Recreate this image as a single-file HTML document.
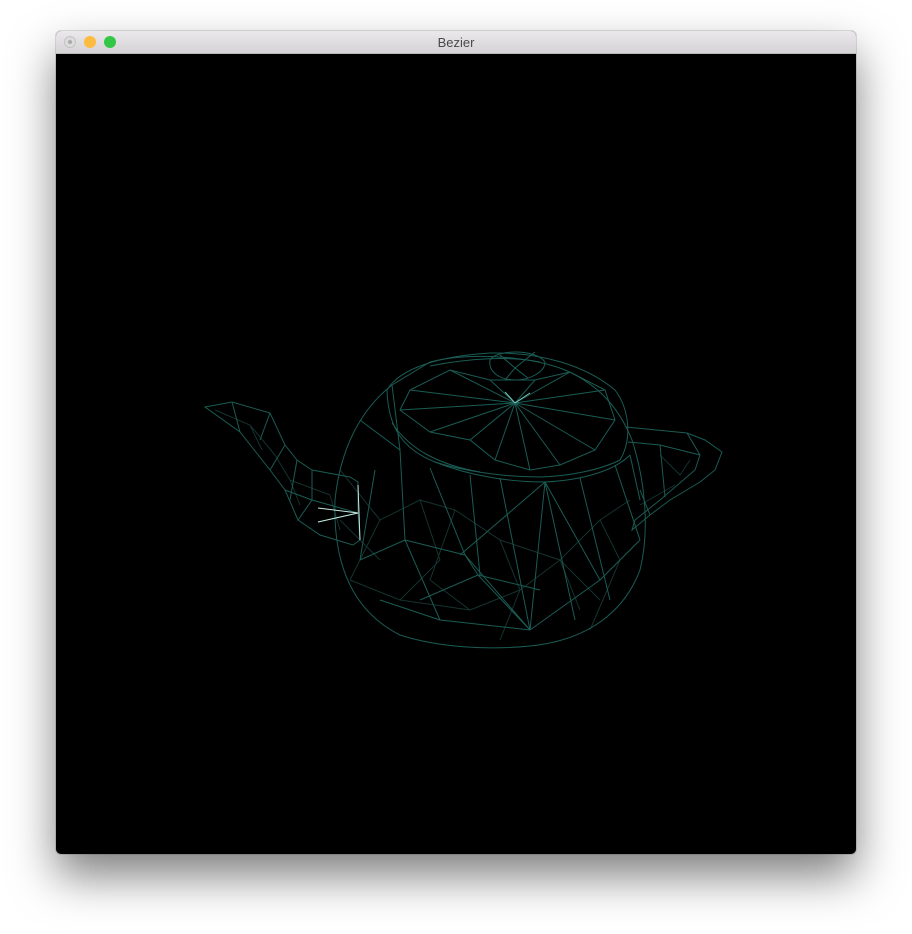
<!DOCTYPE html>
<html><head><meta charset="utf-8"><style>
html,body{margin:0;padding:0;background:#fff;width:912px;height:934px;overflow:hidden}
.win{position:absolute;left:56px;top:31px;width:800px;height:823px;border-radius:5px;box-shadow:0 22px 45px rgba(0,0,0,0.5),0 0 0 1px rgba(0,0,0,0.12);background:#000;overflow:hidden}
.tb{position:absolute;left:0;top:0;width:800px;height:22px;background:linear-gradient(#ebe9eb,#d5d3d5);border-bottom:1px solid #b9b9b9;font:13px "Liberation Sans",sans-serif;color:#4a4a4a;text-align:center;line-height:23px}
.b{position:absolute;top:5px;width:12px;height:12px;border-radius:50%}
svg{position:absolute;left:0;top:0}
</style></head><body>
<div class="win"><div class="tb">Bezier
<div class="b" style="left:8px;background:#dcdcdc;border:1px solid #c4c4c4;width:10px;height:10px"><div style="position:absolute;left:3px;top:3px;width:4px;height:4px;border-radius:50%;background:#aaa"></div></div>
<div class="b" style="left:28px;background:#fdbc40;border:0"></div>
<div class="b" style="left:48px;background:#33c748"></div>
</div></div>
<svg width="912" height="934" viewBox="0 0 912 934" fill="none" stroke="#1e6b62" stroke-width="1">
<!-- dim back mesh -->
<g stroke="#14332f">
<path d="M340,470 L380,520 L350,580 M380,520 L420,500 L440,560 L400,600 M420,500 L455,510 L500,540 L520,590 L560,560 L600,520 L620,560 M455,510 L430,580 L470,610 L520,590 M560,560 L580,610 M500,540 L560,560 M600,520 L630,500 M350,580 L400,600 L470,610 M340,520 L380,560 M600,600 L560,560 M520,590 L500,640 M620,560 L590,630"/>
<path d="M215,410 L250,425 L275,455 L290,480 L330,495 M250,425 L262,450 M290,480 L300,505 M330,495 L340,530 M660,455 L680,475 L690,460 M640,505 L675,485"/>
</g>
<g stroke="#1a5c54">
<path d="M392,385 C360,410 340,450 335,500 C333,560 350,610 400,635 C440,648 490,650 530,646 C590,640 625,610 640,570 C650,530 645,480 632,440 C620,410 600,385 565,370 C530,356 470,352 430,362 Z"/>
<path d="M387,390 C400,368 440,356 490,353 C540,352 585,365 615,390 C630,410 632,440 620,460 C600,470 570,476 540,477 C500,477 460,470 435,462 C405,450 388,430 387,390 Z"/>
<path d="M435,462 C470,476 510,482 545,482 C585,480 615,470 630,455"/>
<path d="M392,423 C410,450 440,465 480,472"/>
<path d="M430,366 C470,358 510,356 540,362"/>
<path d="M490,360 C495,350 535,348 545,362 C545,372 530,380 515,380 C500,380 488,372 490,360 Z"/>
<path d="M500,355 L515,368 L535,352 M505,380 L515,368 L528,378"/>
<path d="M515,403 L400,410 M515,403 L430,432 M515,403 L470,440 M515,403 L495,460 M515,403 L530,470 M515,403 L560,465 M515,403 L595,450 M515,403 L615,420 M515,403 L605,390 M515,403 L570,372 M515,403 L535,380 M515,403 L490,380 M515,403 L450,370 M515,403 L410,390"/>
<path d="M400,410 L430,432 L470,440 L495,460 L530,470 L560,465 L595,450 L615,420 L605,390 L570,372 L535,380 L490,380 L450,370 L410,390 Z"/>
<path d="M430,468 L465,555 L530,630 M470,475 L480,575 M500,478 L530,630 M545,482 L530,630 M545,482 L575,620 M580,478 L610,600 M615,465 L640,540 M400,450 L405,540 L440,620 M375,470 L360,560 M545,482 L460,555 M545,482 L600,580 M465,555 L405,540 M465,555 L478,575 L530,630 M478,575 L420,600 M478,575 L540,590 M600,580 L530,630 M600,580 L640,540 M405,540 L360,560 M440,620 L530,630 M380,600 L440,620 M392,385 L400,450 M360,420 L400,450 M630,455 L640,500"/>
<path d="M205,407 L232,402 L270,413 L285,445 L297,460 L312,470 L350,477 L358,482 L358,513 L360,540 L353,545 L320,535 L298,520 L285,490 L270,470 L240,432 L205,407 Z"/>
<path d="M232,402 L240,432 M270,413 L260,440 M285,445 L270,470 M297,460 L290,500 M312,470 L312,500 M312,500 L358,513 L318,522 M312,500 L285,490 M312,500 L298,520"/>
<path d="M626,427 L687,433 L705,440 L722,452 L715,470 L700,482 L670,500 L650,515 L632,530 L635,520 L660,500 L695,470 L700,455 L660,445 L628,442"/>
<path d="M660,445 L665,497 M687,433 L700,455 M650,515 L640,490"/>
</g>
<path d="M318,508 L358,513 L318,522 M358,485 L360,540" stroke="#c8e8e2"/>
<path d="M515,403 L530,393 M515,403 L505,392" stroke="#7ec8bb"/>
</svg>
</body></html>
